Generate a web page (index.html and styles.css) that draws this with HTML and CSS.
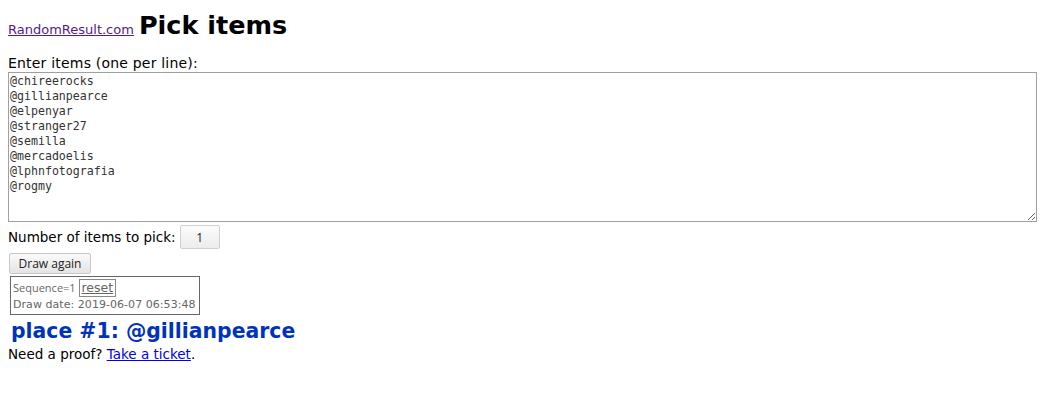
FILE: index.html
```html
<!DOCTYPE html>
<html>
<head>
<meta charset="utf-8">
<title>Pick items</title>
<link rel="stylesheet" href="styles.css">
</head>
<body>
<div class="head">
    <a class="site" href="#">RandomResult.com</a>
    <h1>Pick items</h1>
</div>
<form class="pick">
    <label class="lbl" for="items">Enter items (one per line):</label>
    <textarea id="items" class="items">@chireerocks
@gillianpearce
@elpenyar
@stranger27
@semilla
@mercadoelis
@lphnfotografia
@rogmy</textarea>
    <div class="count">
        <span>Number of items to pick:</span>
        <input class="num" type="text" value="1">
    </div>
    <button type="button" class="draw">Draw again</button>
</form>
<div class="seq">
    <div class="seq-top">Sequence=1 <a class="reset" href="#">reset</a></div>
    <div class="seq-date">Draw date: 2019-06-07 06:53:48</div>
</div>
<div class="result">place #1: @gillianpearce</div>
<div class="proof">Need a proof? <a href="#">Take a ticket</a>.</div>
</body>
</html>
```

FILE: styles.css
```css
body {
    margin: 8px;
    font-family: "DejaVu Sans", Verdana, sans-serif;
    font-size: 13px;
    color: #000;
}
.head {
    display: flex;
    align-items: baseline;
    gap: 5px;
    height: 30px;
    margin-top: 2px;
}
.site {
    font-size: 13px;
    color: #551a8b;
}
.head h1 {
    margin: 0;
    font-size: 25.5px;
    line-height: 30px;
    font-weight: bold;
}
.pick {
    margin-top: 15px;
}
.lbl {
    display: block;
    font-size: 14px;
    letter-spacing: 0.2px;
    line-height: 17px;
}
.items {
    display: block;
    box-sizing: border-box;
    width: 1029px;
    height: 150px;
    margin: 0;
    padding: 1px 1px;
    border: 1px solid #a0a0a0;
    font-family: "DejaVu Sans Mono", monospace;
    font-size: 11.6px;
    line-height: 15px;
    color: #333;
}
.count {
    display: flex;
    align-items: center;
    gap: 4px;
    margin-top: 3px;
    font-size: 13.5px;
}
.num {
    box-sizing: border-box;
    width: 40px;
    height: 24px;
    margin: 0;
    border: 1px solid #d0d0d0;
    border-radius: 2px;
    text-align: center;
    font-family: "Open Sans", sans-serif;
    font-size: 12px;
    color: #222;
    background: linear-gradient(#fbfbfb, #ececec);
}
.draw {
    display: block;
    margin: 4px 0 0 1px;
    width: 82px;
    height: 21px;
    padding: 0;
    border: 1px solid #c8c8c8;
    border-radius: 2px;
    background: linear-gradient(#fafafa, #e4e4e4);
    font-family: "Open Sans", sans-serif;
    font-size: 12px;
    color: #222;
}
.seq {
    display: inline-block;
    box-sizing: border-box;
    width: 190px;
    height: 39px;
    margin: 2px 0 0 2px;
    padding: 2px 2px;
    border: 1px solid #666;
    color: #666;
}
.seq-top {
    font-family: "Open Sans", sans-serif;
    font-size: 11px;
    line-height: 18px;
}
.reset {
    display: inline-block;
    line-height: 16px;
    color: #666;
    font-family: "DejaVu Sans", sans-serif;
    font-size: 12.5px;
    border: 1px solid #888;
    padding: 0 2px;
}
.seq-date {
    font-size: 11px;
    line-height: 15px;
    letter-spacing: 0.05px;
}
.result {
    margin: 3px 0 0 3px;
    font-size: 20.4px;
    line-height: 26px;
    font-weight: bold;
    color: #0033bb;
}
.proof {
    margin-top: 2px;
    font-size: 13.5px;
    line-height: 16px;
}
.proof a {
    color: #0000ee;
}
```
